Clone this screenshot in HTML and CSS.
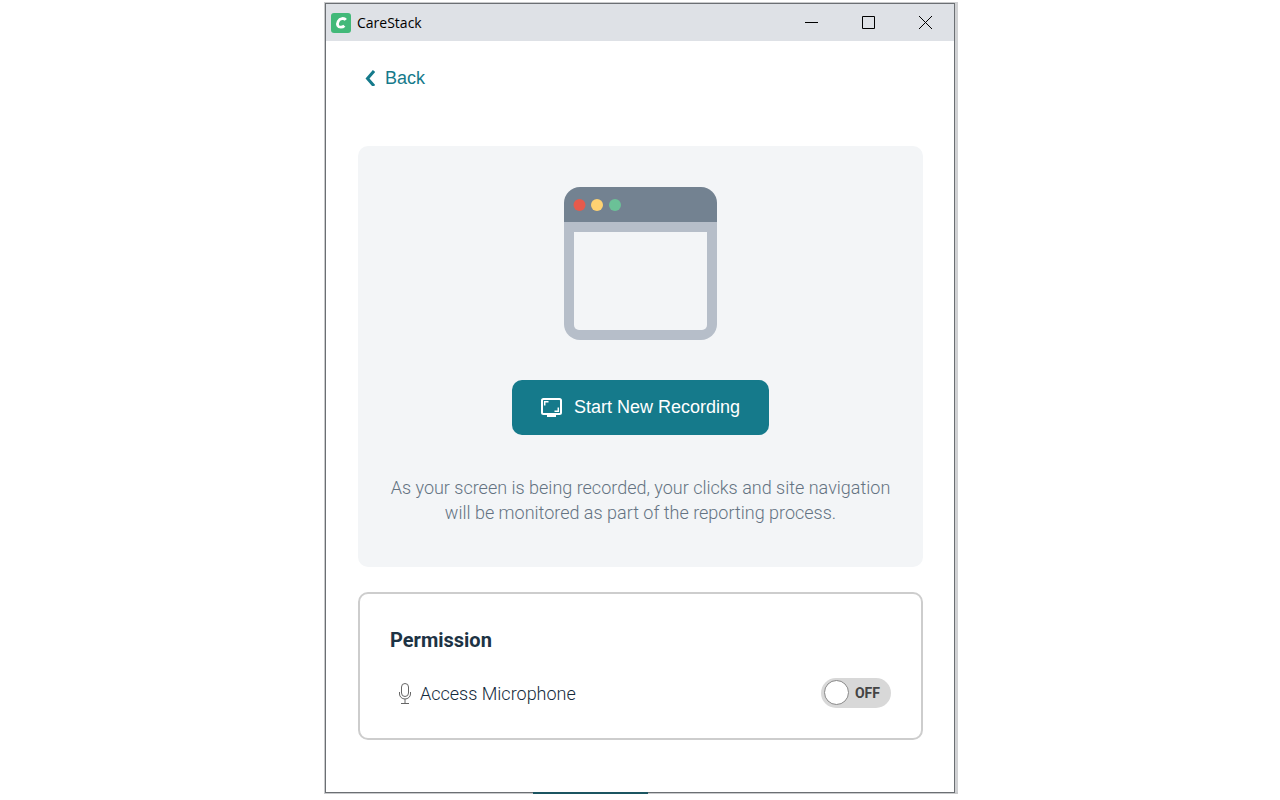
FILE: index.html
```html
<!DOCTYPE html>
<html lang="en">
<head>
    <meta charset="UTF-8">
    <meta name="viewport" content="width=device-width, initial-scale=1.0">
    <title>CareStack</title>
    <link rel="stylesheet" href="styles.css">
</head>
<body>

<div class="window">
    <header class="title-bar">
        <svg class="logo" width="20" height="20" viewBox="0 0 20 20" aria-hidden="true">
            <rect width="20" height="20" rx="3" fill="#42b979"/>
            <path d="M14.800 6.900C13.200 4.800 9 4.900 7.200 8.300c-1.700 3.400-.2 5.900 2.600 5.900 1.500 0 2.700-.6 3.500-1.500" fill="none" stroke="#fff" stroke-width="2.800"/>
        </svg>
        <h1>CareStack</h1>
        <div class="window-buttons">
            <button type="button" aria-label="Minimize">
                <svg width="13" height="13" viewBox="0 0 13 13"><path d="M0 6.500h13"/></svg>
            </button>
            <button type="button" aria-label="Maximize">
                <svg width="13" height="13" viewBox="0 0 13 13"><path d="M.5.5h12v12H.5z"/></svg>
            </button>
            <button type="button" aria-label="Close">
                <svg width="13" height="13" viewBox="0 0 13 13"><path d="M0 0l13 13M13 0L0 13"/></svg>
            </button>
        </div>
    </header>

    <main>
        <a class="back" href="#">
            <svg width="10" height="16" viewBox="0 0 10 16" aria-hidden="true"><path d="M9 1L2.500 8.500 9 16"/></svg>
            Back
        </a>

        <!-- Recording -->
        <section class="recording">
            <svg class="browser" width="153" height="153" viewBox="0 0 153 153" aria-hidden="true">
                <path d="M0 30h153v107a16 16 0 0 1-16 16H16a16 16 0 0 1-16-16z" fill="#b6bec9"/>
                <path d="M0 35V16A16 16 0 0 1 16 0h121a16 16 0 0 1 16 16v19z" fill="#738291"/>
                <path d="M10 45h133v93a5 5 0 0 1-5 5H15a5 5 0 0 1-5-5z" fill="#f3f5f7"/>
                <circle cx="15.500" cy="18" r="6" fill="#e65a4c"/>
                <circle cx="33" cy="18" r="6" fill="#fed272"/>
                <circle cx="51" cy="18" r="6" fill="#6bc197"/>
            </svg>
            <button type="button" class="start">
                <svg width="21" height="19" viewBox="0 0 21 19" aria-hidden="true">
                    <rect x="1" y="1" width="19" height="15" rx="1.500" fill="none" stroke="#fff" stroke-width="2"/>
                    <path d="M6 16h9v3H6z" fill="#fff"/>
                    <path d="M3.700 7.500V3.700H7.500M17.300 9.500v3.800H13.500" fill="none" stroke="#fff" stroke-width="1.500"/>
                </svg>
                Start New Recording
            </button>
            <p>As your screen is being recorded, your clicks and site navigation will be monitored as part of the reporting process.</p>
        </section>

        <!-- Permissions -->
        <section class="permission">
            <h2>Permission</h2>
            <div class="permission-row">
                <svg width="12" height="21" viewBox="0 0 12 21" aria-hidden="true">
                    <rect x="2.500" y=".5" width="7" height="13" rx="3.500"/>
                    <path d="M.5 9v2a5.500 5 0 0 0 11 0V9M6 16v4.500M2 20.500h8"/>
                </svg>
                <label for="microphone">Access Microphone</label>
                <span class="switch">
                    <input type="checkbox" id="microphone">
                    <span class="switch-text">OFF</span>
                </span>
            </div>
        </section>
    </main>
</div>

</body>
</html>
```
FILE: styles.css
```css
* {
    box-sizing: border-box;
}

body {
    margin: 0;
    padding: 3px 0 7px;
    background-color: #fff;
    font-family: Roboto, sans-serif;
}

button {
    border: none;
    cursor: pointer;
}

/* Window */
.window {
    position: relative;
    max-width: 630px;
    margin: 0 auto;
    border: 1px solid #6b6f73;
    background-color: #fff;
    box-shadow: -1px -1px 0 #c9cacc, -1px 1px 0 #c9cacc, 3px -1px 0 #d0d1d3, 3px 1px 0 #c9cacc;
}

/* Strip of the page behind the window */
.window::after {
    content: "";
    position: absolute;
    bottom: -2px;
    left: 33%;
    width: 115px;
    height: 2px;
    background-color: #1b5561;
}

.title-bar {
    display: flex;
    align-items: center;
    gap: 6px;
    height: 37px;
    padding: 0 0 0 5px;
    background-color: #dee1e6;
}

.title-bar h1 {
    margin: 0;
    font-family: "Open Sans", sans-serif;
    font-size: 14px;
    font-weight: normal;
    color: #000;
}

.window-buttons {
    display: flex;
    height: 100%;
    margin-left: auto;
}

.window-buttons button {
    display: flex;
    align-items: center;
    justify-content: center;
    width: 57px;
    padding: 0;
    background: none;
}

.window-buttons svg {
    fill: none;
    stroke: #000;
}

main {
    padding: 24px 31px 52px 32px;
}

.back {
    display: inline-flex;
    align-items: center;
    gap: 10px;
    margin-left: 7px;
    font-family: "Liberation Sans", Arial, sans-serif;
    font-size: 18px;
    line-height: 26px;
    color: #157a8b;
    text-decoration: none;
}

.back svg {
    fill: none;
    stroke: #157a8b;
    stroke-width: 3px;
}

/* Recording */
.recording {
    display: flex;
    flex-direction: column;
    align-items: center;
    margin-top: 55px;
    padding: 41px 24px 42px;
    border-radius: 10px;
    background-color: #f3f5f7;
    text-align: center;
}

.start {
    display: flex;
    align-items: center;
    justify-content: center;
    gap: 12px;
    height: 55px;
    margin: 40px 0;
    padding: 0 29px;
    border-radius: 10px;
    background-color: #157a8b;
    color: #fff;
    font-family: "Liberation Sans", Arial, sans-serif;
    font-size: 18px;
}

.recording p {
    margin: 0;
    font-size: 18px;
    font-weight: 350;
    line-height: 25px;
    color: #647382;
}

/* Permissions */
.permission {
    margin-top: 25px;
    padding: 32px 30px 30px;
    border: 2px solid #cdcdcd;
    border-radius: 10px;
}

.permission h2 {
    margin: 0 0 24px;
    font-size: 20px;
    font-weight: bold;
    line-height: 28px;
    color: #1d3344;
}

.permission-row {
    display: flex;
    align-items: center;
    gap: 9px;
    padding-left: 9px;
}

.permission-row svg {
    fill: none;
    stroke: #666;
}

.permission-row label {
    font-size: 18px;
    font-weight: 350;
    color: #142a3b;
}

.switch {
    position: relative;
    margin-left: auto;
}

.switch input {
    display: block;
    appearance: none;
    width: 70px;
    height: 30px;
    margin: 0;
    padding: 2px 3px;
    border-radius: 15px;
    background-color: #d8d8d8;
    cursor: pointer;
}

.switch input::before {
    content: "";
    display: block;
    box-sizing: border-box;
    width: 25px;
    height: 25px;
    border: 1px solid #888;
    border-radius: 50%;
    background-color: #fff;
}

.switch-text {
    position: absolute;
    top: 0;
    right: 11px;
    font-size: 14px;
    font-weight: bold;
    line-height: 30px;
    color: #444;
    pointer-events: none;
}
```
